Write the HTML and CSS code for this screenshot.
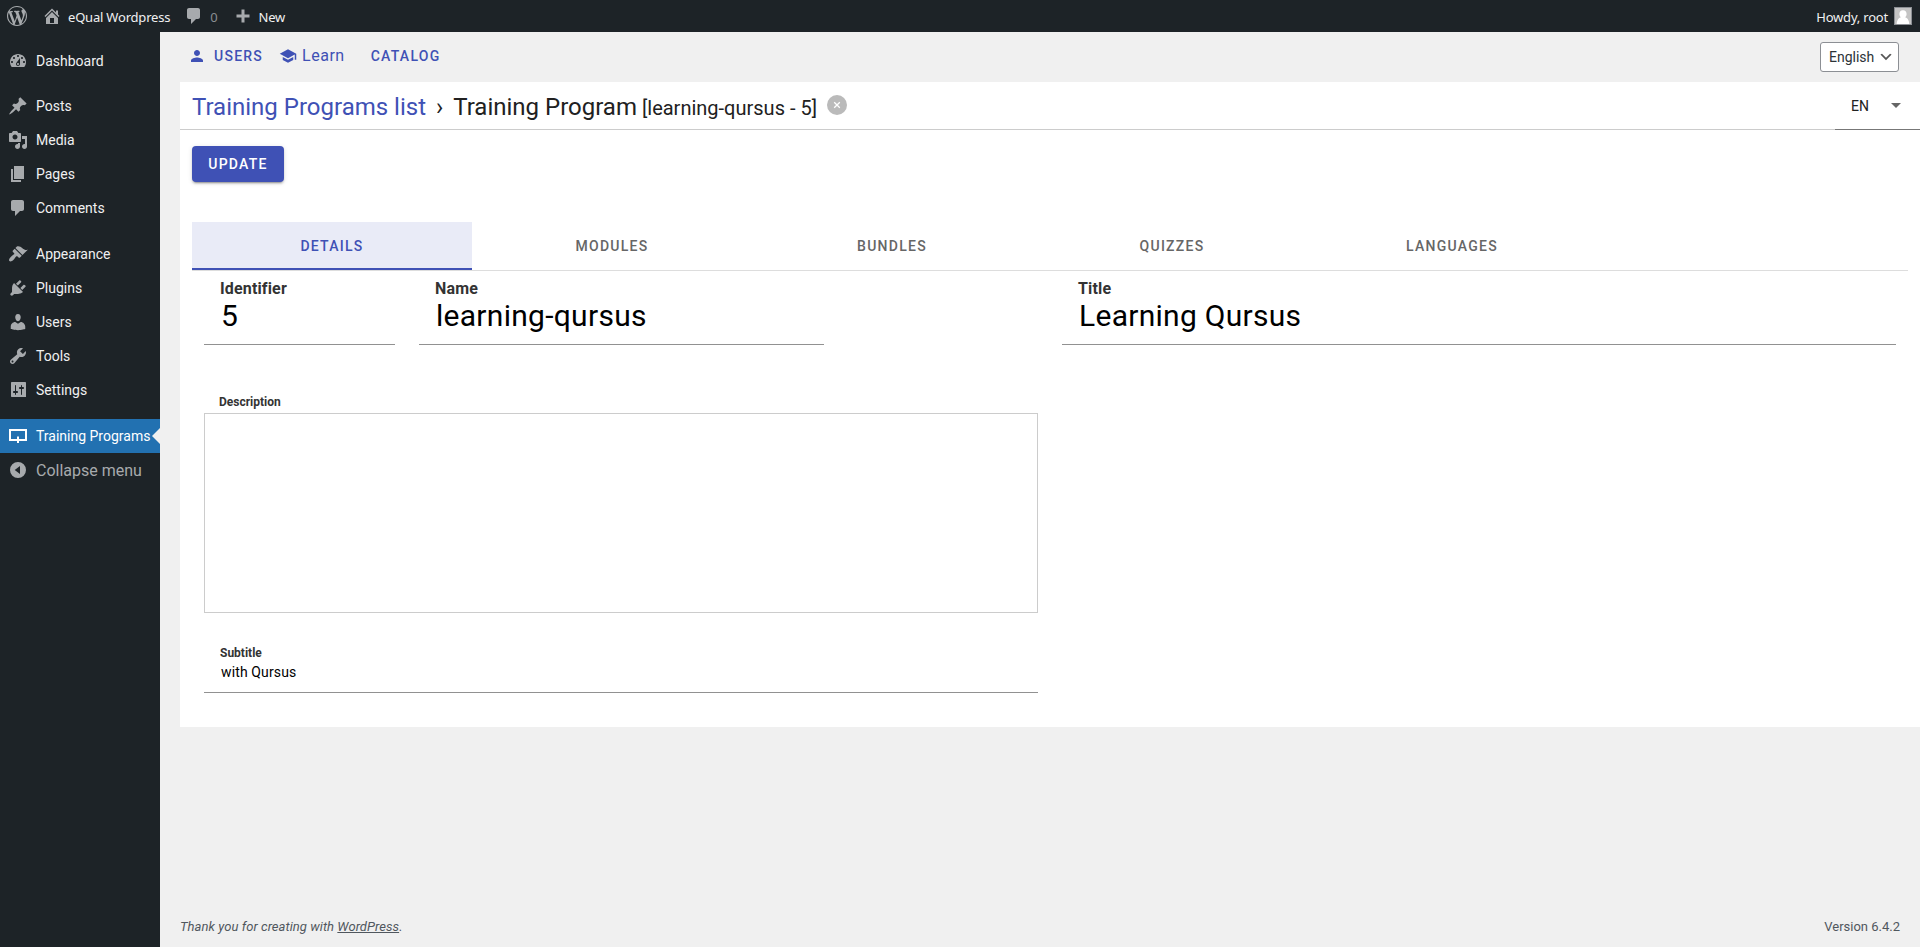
FILE: index.html
```html
<!DOCTYPE html>
<html lang="en">
<head>
<meta charset="utf-8">
<title>Training Programs</title>
<link rel="stylesheet" href="styles.css">
</head>
<body>
<header class="adminbar">
  <svg class="icon wp" viewBox="0 0 20 20"><path d="M20 10c0-5.51-4.49-10-10-10C4.48 0 0 4.49 0 10c0 5.52 4.48 10 10 10 5.51 0 10-4.48 10-10zM7.78 15.37L4.37 6.22c.55-.02 1.17-.08 1.17-.08.5-.06.44-1.13-.06-1.11 0 0-1.45.11-2.37.11-.18 0-.37 0-.58-.01C4.12 2.69 6.87 1.11 10 1.11c2.33 0 4.45.87 6.05 2.34-.68-.11-1.65.39-1.65 1.58 0 .74.45 1.36.9 2.1.35.61.55 1.36.55 2.46 0 1.49-1.4 5-1.4 5l-3.03-8.37c.54-.02.82-.17.82-.17.5-.05.44-1.25-.06-1.22 0 0-1.44.12-2.38.12-.87 0-2.33-.12-2.33-.12-.5-.03-.56 1.2-.06 1.22l.92.08 1.26 3.41zM17.41 10c.24-.64.74-1.87.43-4.25.7 1.29 1.05 2.71 1.05 4.25 0 3.29-1.73 6.24-4.4 7.78.97-2.59 1.94-5.2 2.92-7.78zM6.1 18.09C3.12 16.65 1.11 13.53 1.11 10c0-1.3.23-2.48.72-3.59C3.25 10.3 4.67 14.2 6.1 18.09zm4.03-6.63l2.58 6.98c-.86.29-1.76.45-2.71.45-.79 0-1.57-.11-2.29-.33.81-2.38 1.62-4.74 2.42-7.1z"/></svg>
  <svg class="icon home" viewBox="0 0 20 20"><path d="M16 8.5l1.53 1.53-1.06 1.06L10 4.6l-6.47 6.49-1.06-1.06L10 2.5l4 4v-2h2v4zm-6-2.46l6 5.99V18H4v-5.97zM12 17v-5H8v5h4z"/></svg>
  <span class="site">eQual Wordpress</span>
  <svg class="icon bubble" viewBox="0 0 20 20"><path d="M5 2h9c1.1 0 2 .9 2 2v7c0 1.1-.9 2-2 2h-2l-5 5v-5H5c-1.1 0-2-.9-2-2V4c0-1.1.9-2 2-2z"/></svg>
  <span class="count">0</span>
  <svg class="icon plus" viewBox="0 0 20 20"><path d="M8.500 3.500h3v5h5v3h-5v5h-3v-5h-5v-3h5z"/></svg>
  <span>New</span>
  <span class="howdy">Howdy, root</span>
  <svg class="avatar" viewBox="0 0 18 18"><path fill="#8c8f94" d="M0 0h18v18H0z"/><path fill="#c4c4c4" d="M1 1h16v16H1z"/><path fill="#fff" d="M9 3.200c2.300 0 3.600 1.600 3.600 3.700 0 1.600-.7 2.700-1.600 3.400 2.300.8 4 2.500 4.300 6.700H2.700c.3-4.200 2-5.900 4.300-6.700-.9-.7-1.600-1.800-1.600-3.400 0-2.100 1.300-3.700 3.600-3.700z"/></svg>
</header>
<div class="shell">
  <nav class="menu">
    <a class="item"><svg class="icon" viewBox="0 0 20 20"><path d="M3.76 16h12.48c1.1-1.37 1.76-3.11 1.76-5 0-4.42-3.58-8-8-8s-8 3.580-8 8c0 1.890.66 3.630 1.760 5zM10 4c.55 0 1 .45 1 1s-.45 1-1 1-1-.45-1-1 .45-1 1-1zM6 6c.55 0 1 .45 1 1s-.45 1-1 1-1-.45-1-1 .45-1 1-1zm8 0c.55 0 1 .45 1 1s-.45 1-1 1-1-.45-1-1 .45-1 1-1zm-5.370 5.550L12 7v6c0 1.100-.9 2-2 2s-2-.9-2-2c0-.57.24-1.080.63-1.450zM4 10c.55 0 1 .45 1 1s-.45 1-1 1-1-.45-1-1 .45-1 1-1zm12 0c.55 0 1 .45 1 1s-.45 1-1 1-1-.45-1-1 .45-1 1-1zm-5 3c0-.55-.45-1-1-1s-1 .45-1 1 .45 1 1 1 1-.45 1-1z"/></svg>Dashboard</a>
    <a class="item spaced"><svg class="icon" viewBox="0 0 20 20"><path d="M10.44 3.02l1.820-1.820 6.360 6.350-1.830 1.820c-1.050-.68-2.480-.57-3.410.36l-.75.75c-.92.93-1.040 2.350-.35 3.410l-1.830 1.820-2.410-2.410-2.800 2.790c-.42.42-3.380 2.710-3.800 2.290s1.860-3.390 2.280-3.810l2.790-2.790L4.100 9.360l1.830-1.820c1.050.69 2.480.57 3.400-.36l.75-.75c.93-.92 1.050-2.350.36-3.410z"/></svg>Posts</a>
    <a class="item"><svg class="icon" viewBox="0 0 20 20"><path d="M13 11V4c0-.55-.45-1-1-1h-1.670L9 1H5L3.670 3H2c-.55 0-1 .45-1 1v7c0 .55.45 1 1 1h10c.55 0 1-.45 1-1zM7 4.500c1.380 0 2.500 1.120 2.500 2.500S8.380 9.500 7 9.500 4.500 8.380 4.500 7 5.620 4.500 7 4.500zM14 6h5v10.500c0 1.380-1.120 2.500-2.500 2.500S14 17.880 14 16.500s1.120-2.500 2.500-2.500c.17 0 .34.02.5.05V9h-3V6zm-4 8.050V13h2v3.500c0 1.380-1.120 2.500-2.500 2.500S7 17.880 7 16.500 8.120 14 9.500 14c.17 0 .34.02.5.05z"/></svg>Media</a>
    <a class="item"><svg class="icon" viewBox="0 0 20 20"><path d="M6 15V2h10v13H6zm-1 1h8v2H3V5h2v11z"/></svg>Pages</a>
    <a class="item"><svg class="icon" viewBox="0 0 20 20"><path d="M5 2h9c1.100 0 2 .9 2 2v7c0 1.100-.9 2-2 2h-2l-5 5v-5H5c-1.100 0-2-.9-2-2V4c0-1.100.9-2 2-2z"/></svg>Comments</a>
    <a class="item spaced wide"><svg class="icon" viewBox="0 0 20 20"><path d="M14.480 11.060L7.410 3.990l1.500-1.500c.5-.56 2.300-.47 3.510.32 1.210.8 1.430 1.280 2.910 2.100 1.180.64 2.450 1.260 4.450.85zm-.71.71L6.700 4.700 4.930 6.470c-.39.39-.39 1.020 0 1.410l1.060 1.060c.39.39.39 1.030 0 1.420-.6.6-1.430 1.110-2.210 1.690-.35.26-.7.53-1.010.84C1.430 14.230.4 16.080 1.400 17.070c.99 1 2.840-.03 4.180-1.360.31-.31.58-.66.85-1.020.57-.78 1.080-1.610 1.690-2.210.39-.39 1.020-.39 1.410 0l1.060 1.060c.39.39 1.020.39 1.410 0z"/></svg>Appearance</a>
    <a class="item"><svg class="icon" viewBox="0 0 20 20"><path d="M13.110 4.360L9.870 7.600 8 5.730l3.240-3.240c.35-.34 1.050-.2 1.560.32.52.51.66 1.210.31 1.550zm-8 1.770l.91-1.120 9.010 9.010-1.190.84c-.71.71-2.630 1.160-3.820 1.160H6.140L4.900 17.260c-.59.59-1.540.59-2.120 0-.59-.58-.59-1.530 0-2.120l1.240-1.240v-3.880c0-1.130.4-3.190 1.090-3.890zm7.260 3.970l3.240-3.240c.34-.35 1.040-.21 1.550.31.52.51.66 1.210.31 1.550l-3.240 3.250z"/></svg>Plugins</a>
    <a class="item"><svg class="icon" viewBox="0 0 20 20"><path d="M10 9.250c-2.270 0-2.730-3.440-2.730-3.440C7 4.020 7.820 2 9.970 2c2.160 0 2.980 2.020 2.710 3.810 0 0-.41 3.440-2.680 3.440zm0 2.570L12.720 10c2.390 0 4.520 2.330 4.520 4.530v2.490s-3.650 1.130-7.240 1.130c-3.650 0-7.240-1.130-7.240-1.130v-2.490c0-2.250 1.940-4.480 4.470-4.480z"/></svg>Users</a>
    <a class="item"><svg class="icon" viewBox="0 0 20 20"><path d="M16.680 9.770c-1.340 1.340-3.300 1.670-4.950.99l-5.410 6.520c-.99.99-2.590.99-3.580 0s-.99-2.590 0-3.570l6.520-5.420c-.68-1.650-.35-3.610.99-4.950 1.280-1.280 3.120-1.620 4.720-1.060l-2.890 2.890 2.820 2.820 2.860-2.870c.53 1.580.18 3.390-1.080 4.650zM3.810 16.210c.4.39 1.040.39 1.430 0 .4-.4.4-1.040 0-1.430-.39-.4-1.030-.4-1.430 0-.39.39-.39 1.030 0 1.430z"/></svg>Tools</a>
    <a class="item"><svg class="icon" viewBox="0 0 20 20"><path d="M18 17V3c0-.6-.4-1-1-1H4c-.6 0-1 .4-1 1v13c0 .6.4 1 1 1h14zM8 11h1c.55 0 1 .45 1 1s-.45 1-1 1H8v1.500c0 .28-.22.5-.5.5s-.5-.22-.5-.5V13H6c-.55 0-1-.45-1-1s.45-1 1-1h1V5.500c0-.28.22-.5.5-.5s.5.22.5.5V11zm5-2h-1c-.55 0-1-.45-1-1s.45-1 1-1h1V5.500c0-.28.22-.5.5-.5s.5.22.5.5V7h1c.55 0 1 .45 1 1s-.45 1-1 1h-1v5.500c0 .28-.22.5-.5.5s-.5-.22-.5-.5V9z"/></svg>Settings</a>
    <a class="item spaced wide current"><svg class="icon" viewBox="0 0 20 20"><path fill-rule="evenodd" d="M1 3h18v12h-8v2H9v-2H1zM3 5v8h6v-2.500h2V13h6V5z"/></svg>Training Programs</a>
    <a class="item collapse"><svg class="icon" viewBox="0 0 20 20"><path fill-rule="evenodd" d="M10 2a8 8 0 1 1 0 16 8 8 0 0 1 0-16zM12 6L6.700 10 12 14z"/></svg>Collapse menu</a>
  </nav>
  <main class="content">
    <div class="topnav">
      <svg class="mi" viewBox="0 0 24 24"><path d="M12 12c2.210 0 4-1.790 4-4s-1.790-4-4-4-4 1.790-4 4 1.790 4 4 4zm0 2c-2.670 0-8 1.340-8 4v2h16v-2c0-2.660-5.330-4-8-4z"/></svg>
      <span class="navbtn users">USERS</span>
      <svg class="mi" viewBox="0 0 24 24"><path d="M5 13.180v4L12 21l7-3.820v-4L12 17l-7-3.820zM12 3L1 9l11 6 9-4.910V17h2V9L12 3z"/></svg>
      <span class="learn">Learn</span>
      <span class="navbtn catalog">CATALOG</span>
      <div class="select">English<svg viewBox="0 0 20 20"><path d="M5 6l5 5 5-5 2 1-7 7-7-7z"/></svg></div>
    </div>
    <section class="panel">
      <div class="crumbs">
        <a class="link">Training Programs list</a><span class="sep">›</span><span>Training Program</span><small>[learning-qursus - 5]</small>
        <svg class="close" viewBox="0 0 20 20"><circle cx="10" cy="10" r="10" fill="#bababa"/><path d="M7.200 7.200l5.600 5.600m0-5.600l-5.600 5.600" stroke="#fff" stroke-width="1.300"/></svg>
        <div class="lang">EN<i class="caret"></i></div>
      </div>
      <button class="update">UPDATE</button>
      <div class="tabs"><span class="tab active">DETAILS</span><span class="tab">MODULES</span><span class="tab">BUNDLES</span><span class="tab">QUIZZES</span><span class="tab">LANGUAGES</span></div>
      <div class="form">
        <div class="pair">
          <div class="field big ident"><label>Identifier</label><span>5</span></div>
          <div class="field big name"><label>Name</label><span>learning-qursus</span></div>
        </div>
        <div class="field big"><label>Title</label><span>Learning Qursus</span></div>
        <div class="desc"><label>Description</label><div class="area"></div></div>
        <div class="field subtitle"><label>Subtitle</label><span>with Qursus</span></div>
      </div>
    </section>
    <footer class="footer"><em>Thank you for creating with <u>WordPress</u>.</em><span>Version 6.4.2</span></footer>
  </main>
</div>
</body>
</html>
```
FILE: styles.css
```css
* { box-sizing: border-box; }
body { margin: 0; background: #f0f0f0; font-family: Roboto, sans-serif; color: #212121; height: 947px; display: flex; flex-direction: column; overflow: hidden; }
svg { display: block; flex: none; }
.icon { width: 20px; height: 20px; fill: #a7aaad; }
.adminbar { height: 32px; background: #1d2327; color: #f0f0f1; font: 13px/32px "Noto Sans", sans-serif; letter-spacing: -.2px; display: flex; align-items: center; padding: 0 8px 0 7px; flex: none; }
.adminbar span { position: relative; top: 1px; }
.home { margin-left: 15px; margin-right: 6px; }
.bubble { margin-left: 14px; margin-right: 6px; }
.adminbar .count { color: #8a8d91; }
.plus { margin-left: 15px; margin-right: 6px; }
.adminbar .howdy { margin-left: auto; margin-right: 6px; }
.avatar { width: 18px; height: 18px; }
.shell { display: flex; flex: 1; }
.menu { width: 160px; background: #1d2327; padding-top: 12px; flex: none; }
.item { height: 34px; display: flex; align-items: center; padding-left: 8px; gap: 8px; font-size: 14px; color: #f0f0f1; white-space: nowrap; position: relative; }
.item.spaced { margin-top: 11px; }
.item.wide { margin-top: 12px; }
.current { background: #2271b1; color: #fff; }
.current .icon { fill: #fff; }
.current::after { content: ""; position: absolute; right: 0; top: 9px; border: 8px solid transparent; border-right-color: #f0f0f0; border-left: 0; }
.collapse { color: #a7aaad; font-size: 16px; }
.content { flex: 1; padding-left: 20px; display: flex; flex-direction: column; }
.topnav { height: 50px; display: flex; align-items: center; padding: 0 21px 2px 8px; color: #3f51b5; }
.mi { width: 18px; height: 18px; fill: #3f51b5; }
.navbtn { font-size: 14px; font-weight: 500; letter-spacing: 1.25px; }
.users { margin: 0 16px 0 8px; }
.learn { font-size: 16px; letter-spacing: .5px; margin-left: 5px; position: relative; top: -1px; }
.catalog { margin-left: 26px; }
.select { margin-left: auto; width: 79px; height: 30px; background: #fff; border: 1px solid #8c8f94; border-radius: 3px; color: #2c3338; font-size: 14px; display: flex; align-items: center; padding-left: 8px; position: relative; top: 1px; }
.select svg { width: 16px; height: 16px; margin-left: 4px; fill: #555; }
.panel { background: #fff; height: 645px; }
.crumbs { height: 48px; border-bottom: 1px solid #ccc; padding-left: 12px; display: flex; align-items: baseline; font-size: 24px; line-height: 50px; }
.link { color: #3f51b5; }
.sep { margin: 0 10px; }
.crumbs small { font-size: 20px; margin-left: 5px; }
.close { width: 20px; height: 20px; margin-left: 10px; align-self: flex-start; margin-top: 13px; }
.lang { margin-left: auto; align-self: flex-start; width: 85px; height: 48px; border-bottom: 1px solid #777; padding: 0 19px 0 16px; display: flex; align-items: center; justify-content: space-between; font-size: 14px; }
.caret { border: 5px solid transparent; border-top-color: #666; border-bottom: 0; }
.update { display: block; margin: 16px 0 0 12px; width: 92px; height: 36px; border: 0; border-radius: 4px; background: #3f51b5; color: #fff; font: 500 14px Roboto, sans-serif; letter-spacing: 1.25px; padding: 0; box-shadow: 0 3px 1px -2px rgba(0,0,0,.2), 0 2px 2px rgba(0,0,0,.14), 0 1px 5px rgba(0,0,0,.12); }
.tabs { margin: 40px 12px 0; height: 49px; border-bottom: 1px solid #ddd; display: flex; }
.tab { width: 280px; height: 48px; line-height: 48px; text-align: center; font-size: 14px; font-weight: 500; letter-spacing: 1.25px; color: #666; }
.tab.active { background: #e9ebf7; color: #3f51b5; border-bottom: 2px solid #3f51b5; }
.form { margin: 0 24px; display: grid; grid-template-columns: 834px 834px; column-gap: 24px; }
.pair { display: flex; gap: 24px; }
.field { display: flex; flex-direction: column; padding-left: 16px; border-bottom: 1px solid #919191; color: #000; }
label { font-weight: 700; color: #333; }
.big { height: 74px; padding-top: 8px; }
.big label { font-size: 16px; line-height: 20px; letter-spacing: .009375em; }
.big span { font-size: 30px; line-height: 34px; padding-left: 1px; letter-spacing: .009375em; }
.ident { width: 191px; }
.name { width: 405px; }
.desc { grid-column: 1; margin-top: 47px; }
.desc label { display: block; font-size: 12px; line-height: 20px; padding: 0 0 1px 15px; }
.area { height: 200px; border: 1px solid #ccc; }
.subtitle { grid-column: 1; height: 80px; padding-top: 30px; }
.subtitle label { font-size: 12px; line-height: 20px; }
.subtitle span { font-size: 14px; line-height: 18px; padding-left: 1px; letter-spacing: .009375em; }
.footer { margin-top: auto; padding: 0 20px 9px 0; height: 31px; display: flex; justify-content: space-between; font-size: 13px; line-height: 22px; color: #50575e; }
.footer em { letter-spacing: .06px; }
```
